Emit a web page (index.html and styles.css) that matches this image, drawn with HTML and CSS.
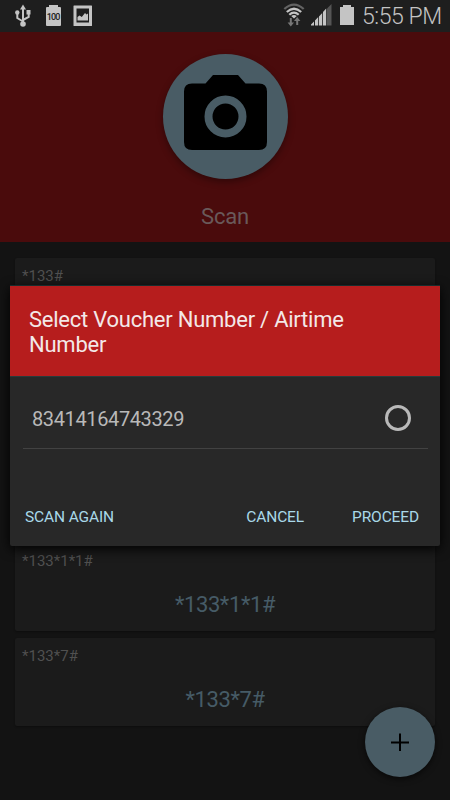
FILE: index.html
```html
<!DOCTYPE html>
<html lang="en">
<head>
<meta charset="utf-8">
<title>Scan</title>
<link rel="stylesheet" href="styles.css">
</head>
<body>
<div class="screen">
  <header class="status">
    <svg class="usb" width="16" height="24" viewBox="0 0 16 24"><g fill="none" stroke="#c4c4c4" stroke-width="2"><path d="M8 4V20M8 17.500L2.300 14V9M8 16L13.700 13V8"/></g><g fill="#c4c4c4"><path d="M8 .5L11 5.500H5z"/><circle cx="8" cy="20" r="2.800"/><circle cx="2.300" cy="8.500" r="2.200"/><path d="M11.500 6h4v4.500h-4z"/></g></svg>
    <span class="battery-full"><span class="battery-text">100</span></span>
    <svg class="picture" width="20" height="22" viewBox="0 0 20 22"><path fill="#c4c4c4" fill-rule="evenodd" d="M1 .5h17.500q.5 0 .5.5v19.500q0 .5-.5.5H1q-.5 0-.5-.5V1q0-.5.5-.5zM3.500 3.500v14h12.500v-14z"/><path fill="#c4c4c4" d="M4.500 15.500v-3.500l2-1.500 2.300 1.500L12 8l1.500 1.500 1.500-1v7z"/></svg>
    <span class="spacer"></span>
    <svg class="wifi" width="22" height="24" viewBox="0 0 22 24"><g fill="none" stroke-width="2.200"><path stroke="#636363" d="M1.300 6Q11-2.800 20.700 6"/><path stroke="#c4c4c4" d="M3.800 9Q11 2.500 18.200 9M6.300 11.800Q11 7.500 15.700 11.800"/></g><path fill="#c4c4c4" d="M8.200 13Q11 11 13.800 13L11 15.500z"/><path fill="#777" d="M6.800 15h2v4.500H11L7.800 23.500 4.600 19.500h2.200zM13.200 22h2V18H17.400L14.200 14 11 18h2.200z"/></svg>
    <svg class="signal" width="21" height="22" viewBox="0 0 21 22"><g fill="#c4c4c4"><path d="M0 21.500v-1l3-3v4zM4 21.500v-5l3.200-3.500v8.500zM8 21.500v-9l3.200-3.500v12.500zM12 21.500V8l3.200-3.500v17z"/></g><path fill="#555" d="M16 21.500V4.500L20.500 0v21.500z"/></svg>
    <svg class="battery" width="14" height="20" viewBox="0 0 14 20"><path fill="#c4c4c4" d="M3 0h8v2H14v18H0V2h3z"/></svg>
    <span class="time">5:55 PM</span>
  </header>
  <section class="hero">
    <div class="scan-button">
      <svg width="125" height="125" viewBox="0 0 125 125"><path d="M50 21H75L82.500 29.500H96Q104 29.500 104 37.500V88Q104 96 96 96H29Q21 96 21 88V37.500Q21 29.500 29 29.500H42.500z"/><circle cx="62.500" cy="62.500" r="17" fill="none" stroke="#495c65" stroke-width="8"/></svg>
    </div>
    <div class="scan-label">Scan</div>
  </section>
  <main class="cards">
    <article class="card"><div class="name">*133#</div></article>
    <article class="card"></article>
    <article class="card"></article>
    <article class="card"><div class="name">*133*1*1#</div><div class="code">*133*1*1#</div></article>
    <article class="card"><div class="name">*133*7#</div><div class="code">*133*7#</div></article>
  </main>
  <div class="fab"><svg width="70" height="70" viewBox="0 0 70 70"><path d="M35 26.500v17.500M26 35.500h18" stroke="#000" stroke-width="2"/></svg></div>
  <div class="dialog">
    <h1 class="title">Select Voucher Number / Airtime<br>Number</h1>
    <div class="option"><span class="number">83414164743329</span><span class="radio"></span></div>
    <div class="actions"><span class="again">SCAN AGAIN</span><span class="cancel">CANCEL</span><span class="proceed">PROCEED</span></div>
  </div>
</div>
</body>
</html>
```
FILE: styles.css
```css
* { box-sizing: border-box; }
body { margin: 0; background: #131313; font-family: Roboto, sans-serif; }
.screen { position: relative; width: 450px; height: 800px; overflow: hidden; background: #131313; }
svg { display: block; }
.status { display: flex; align-items: flex-start; height: 32px; background: #1e1e1e; padding: 0 8px 0 15px; }
.usb { margin-top: 4px; }
.battery-full { margin: 7px 0 0 15px; width: 15px; height: 19px; border-radius: 1px; background: #c4c4c4; display: flex; flex-direction: column; align-items: center; }
.battery-full::before { content: ""; width: 9px; height: 2px; margin-top: -2px; background: #c4c4c4; flex: none; }
.battery-text { font-size: 9px; font-weight: 500; line-height: 20px; color: #1e1e1e; letter-spacing: -.8px; text-indent: -.8px; }
.picture { margin: 5px 0 0 12px; }
.spacer { flex: 1; }
.wifi { margin-top: 3px; }
.signal { margin: 4px 0 0 6px; }
.battery { margin: 5px 0 0 8px; }
.time { margin: 4px 0 0 8px; width: 80px; font-size: 23px; line-height: 26px; letter-spacing: -.45px; color: #c4c4c4; font-weight: 300; white-space: nowrap; }
.hero { height: 210px; background: #4a0b0c; display: flex; flex-direction: column; align-items: center; padding-top: 22px; }
.scan-button { width: 125px; height: 125px; border-radius: 50%; background: #495c65; box-shadow: 0 3px 7px rgba(0,0,0,.35); }
.scan-label { margin-top: 25px; font-size: 22px; line-height: 26px; letter-spacing: -.2px; color: #69595a; }
.cards { display: flex; flex-direction: column; gap: 7px; padding: 16px 15px 0; }
.card { height: 88px; flex: none; border-radius: 2px; background: #1b1b1b; padding: 9px 7px; box-shadow: 0 1px 2px rgba(0,0,0,.3); }
.name { font-size: 15px; line-height: 18px; color: #505050; }
.code { margin-top: 21px; font-size: 22px; line-height: 28px; letter-spacing: -.4px; color: #465b67; text-align: center; }
.fab { position: absolute; left: 365px; top: 707px; width: 70px; height: 70px; border-radius: 50%; background: #495c65; box-shadow: 0 2px 6px rgba(0,0,0,.6); }
.dialog { position: absolute; left: 10px; top: 285px; width: 430px; height: 261px; border-radius: 2px; background: #282828; box-shadow: 0 3px 12px #000; }
.title { margin: 0; height: 92px; padding: 21px 19px; background: #b61d1d; border-top: 1px solid #182c2d; border-bottom: 1px solid #293b3b; font-size: 22px; line-height: 25px; letter-spacing: -.24px; font-weight: 400; color: #f3e8e8; }
.option { margin: 0 12px 0 13px; height: 72px; display: flex; align-items: center; justify-content: space-between; padding: 11px 17px 0 9px; border-bottom: 1px solid #424242; }
.number { font-size: 20px; line-height: 24px; letter-spacing: -.38px; padding-top: 2px; color: #b9b9b9; }
.radio { width: 26px; height: 26px; border: 3px solid #b9b9b9; border-radius: 50%; }
.actions { display: flex; padding: 58px 21px 0 15px; font-size: 15.500px; line-height: 20px; letter-spacing: -.13px; color: #a9d8e9; }
.cancel { margin-left: auto; }
.proceed { margin-left: 48px; }
```
